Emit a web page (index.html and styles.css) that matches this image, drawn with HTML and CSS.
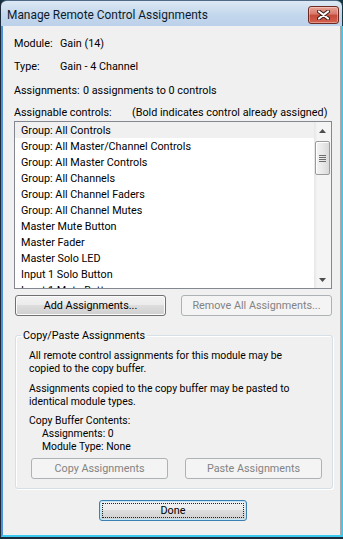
FILE: index.html
```html
<!DOCTYPE html>
<html lang="en">
<head>
  <meta charset="UTF-8" />
  <meta name="viewport" content="width=device-width, initial-scale=1.0" />
  <title>Manage Remote Control Assignments</title>
  <link rel="stylesheet" href="styles.css">
</head>
<body>
  <div class="window">
    <div class="titlebar">
      <span class="title">Manage Remote Control Assignments</span>
      <button class="close" title="Close">
        <svg width="13" height="10" viewBox="0 0 13 10">
          <path d="M2 1.5 L11 8.5 M11 1.5 L2 8.5" stroke="#3b1a16" stroke-width="4" stroke-linecap="round" fill="none"/>
          <path d="M2 1.5 L11 8.5 M11 1.5 L2 8.5" stroke="#ffffff" stroke-width="2.2" stroke-linecap="round" fill="none"/>
        </svg>
      </button>
    </div>

    <div class="frame">
      <div class="client">
        <div class="info"><span class="key">Module:</span><span>Gain (14)</span></div>
        <div class="info type"><span class="key">Type:</span><span>Gain - 4 Channel</span></div>
        <div class="info assign"><span class="key wide">Assignments:</span><span>0 assignments to 0 controls</span></div>

        <div class="list-head">
          <span class="head-key">Assignable controls:</span>
          <span>(Bold indicates control already assigned)</span>
        </div>

        <div class="listbox">
          <div class="items">
            <div class="item hot">Group: All Controls</div>
            <div class="item">Group: All Master/Channel Controls</div>
            <div class="item">Group: All Master Controls</div>
            <div class="item">Group: All Channels</div>
            <div class="item">Group: All Channel Faders</div>
            <div class="item">Group: All Channel Mutes</div>
            <div class="item">Master Mute Button</div>
            <div class="item">Master Fader</div>
            <div class="item">Master Solo LED</div>
            <div class="item">Input 1 Solo Button</div>
            <div class="item">Input 1 Mute Button</div>
          </div>
          <div class="scrollbar">
            <div class="arrow">
              <svg width="7" height="4" viewBox="0 0 7 4"><path d="M0 4 L3.5 0 L7 4 Z" fill="#4d4d4d"/></svg>
            </div>
            <div class="track">
              <div class="thumb">
                <span></span><span></span><span></span><span></span>
              </div>
            </div>
            <div class="arrow">
              <svg width="7" height="4" viewBox="0 0 7 4"><path d="M0 0 L7 0 L3.5 4 Z" fill="#4d4d4d"/></svg>
            </div>
          </div>
        </div>

        <div class="actions">
          <button class="btn">Add Assignments...</button>
          <button class="btn" disabled>Remove All Assignments...</button>
        </div>

        <fieldset class="group">
          <legend>Copy/Paste Assignments</legend>
          <div class="para">
            <div>All remote control assignments for this module may be</div>
            <div>copied to the copy buffer.</div>
          </div>
          <div class="para">
            <div>Assignments copied to the copy buffer may be pasted to</div>
            <div>identical module types.</div>
          </div>
          <div class="para buffer">
            <div>Copy Buffer Contents:</div>
            <div class="indent">Assignments: 0</div>
            <div class="indent">Module Type: None</div>
          </div>
          <div class="copy-row">
            <button class="btn" disabled>Copy Assignments</button>
            <button class="btn" disabled>Paste Assignments</button>
          </div>
        </fieldset>

        <div class="footer">
          <button class="btn default">Done</button>
        </div>
      </div>
    </div>
  </div>
</body>
</html>
```

FILE: styles.css
```css
* {
  box-sizing: border-box;
}
html, body {
  margin: 0;
  padding: 0;
}
body {
  width: 343px;
  height: 539px;
  overflow: hidden;
  background: #123844;
  font-family: Roboto, 'Noto Sans', sans-serif;
  font-size: 10.8px;
  color: #000;
  white-space: nowrap;
}
.window {
  height: 539px;
  display: flex;
  flex-direction: column;
  border-left: 1px solid #1b2b3c;
  border-bottom: 2px solid #1b2b3c;
}
.titlebar {
  height: 26px;
  flex: none;
  display: flex;
  align-items: center;
  justify-content: space-between;
  padding: 2px 3px 0 6px;
  border-top: 1px solid #4f6a86;
  border-radius: 6px 6px 0 0;
  background: linear-gradient(#dde8f4, #c3d7ec 55%, #bcd2ea);
  margin-right: 1px;
}
.title {
  font-size: 11.9px;
  color: #0c1b2c;
}
.close {
  width: 31px;
  height: 18px;
  margin-top: 1px;
  padding: 0;
  border: 1px solid #6e2a22;
  border-radius: 3px;
  background: linear-gradient(#e7a396, #d77a6a 45%, #c44a3a 50%, #d4604c);
  box-shadow: inset 0 0 0 1px rgba(255,255,255,0.35);
  display: flex;
  align-items: center;
  justify-content: center;
}
.frame {
  flex: 1;
  min-height: 0;
  border-left: 2px solid #4f93d6;
  border-right: 2px solid #3dcaf0;
  border-bottom: 2px solid #3dcaf0;
  display: flex;
}
.client {
  flex: 1;
  background: #f0f0f0;
  border-right: 1px solid #a9a9a9;
  padding: 10px 8px 0 11px;
}
.info {
  display: flex;
  line-height: 15px;
}
.info .key {
  width: 46px;
  flex: none;
}
.info .key.wide {
  width: 69px;
}
.type {
  margin-top: 8px;
}
.assign {
  margin-top: 9px;
}
.list-head {
  display: flex;
  margin-top: 7px;
  line-height: 15px;
}
.head-key {
  width: 118px;
  flex: none;
}
.listbox {
  height: 168px;
  margin-top: 1px;
  border: 1px solid #828790;
  background: #fff;
  display: flex;
}
.items {
  flex: 1;
  overflow: hidden;
}
.item {
  height: 16px;
  line-height: 17px;
  padding-left: 6px;
}
.item.hot {
  background: #f0f0f0;
}
.scrollbar {
  width: 17px;
  display: flex;
  flex-direction: column;
  background: linear-gradient(to right, #e6e6e6, #f4f4f4 20%, #f4f4f4);
}
.arrow {
  height: 17px;
  display: flex;
  align-items: center;
  justify-content: center;
}
.track {
  flex: 1;
  padding-top: 2px;
}
.thumb {
  height: 34px;
  margin: 0 1px;
  border: 1px solid #9b9b9b;
  border-radius: 2px;
  background: linear-gradient(to right, #f4f4f4, #e9e9e9 50%, #d9d9d9);
  box-shadow: inset 1px 1px 0 #fff;
  display: flex;
  flex-direction: column;
  align-items: center;
  justify-content: center;
  gap: 1px;
}
.thumb span {
  width: 7px;
  height: 1px;
  background: #6d6d6d;
}
.actions {
  display: flex;
  justify-content: space-between;
  margin-top: 6px;
}
.btn {
  height: 21px;
  padding: 0;
  border: 1px solid #707070;
  border-radius: 3px;
  background: linear-gradient(#f2f2f2, #ebebeb 50%, #dddddd 50%, #cfcfcf);
  box-shadow: inset 0 0 0 1px #fbfbfb;
  font-family: inherit;
  font-size: inherit;
  color: #000;
}
.btn:disabled {
  border-color: #adb2b5;
  background: #f4f4f4;
  box-shadow: none;
  color: #838383;
}
.actions .btn {
  width: 151px;
}
.actions .btn:first-child {
  margin-left: 1px;
}
.group {
  margin: 12px -1px 0 1px;
  padding: 6px 8px 9px 13px;
  border: 1px solid #d5dfe5;
  border-radius: 3px;
  box-shadow: inset 1px 1px 0 #fff, 1px 1px 0 #fff;
}
.group legend {
  margin-left: -8px;
  padding: 0 2px;
  line-height: 15px;
}
.para {
  font-size: 10.4px;
  line-height: 13px;
}
.para + .para {
  margin-top: 7px;
}
.para.buffer {
  margin-top: 6px;
}
.indent {
  padding-left: 13px;
}
.copy-row {
  display: flex;
  gap: 17px;
  margin-top: 5px;
  padding-left: 2px;
}
.copy-row .btn {
  width: 137px;
}
.footer {
  display: flex;
  justify-content: center;
  margin-top: 11px;
}
.btn.default {
  position: relative;
  width: 148px;
  border-color: #3c7fb1;
  box-shadow: inset 0 0 0 1px #bfe6f9;
}
.btn.default::after {
  content: '';
  position: absolute;
  inset: 2px;
  border: 1px dotted #222;
  border-radius: 1px;
}
```
